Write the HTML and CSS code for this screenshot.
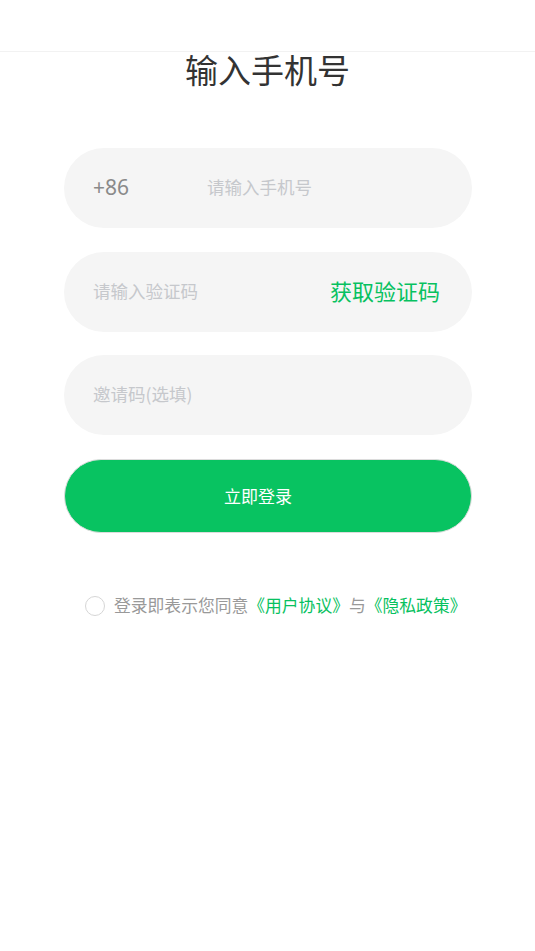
FILE: index.html
```html
<!DOCTYPE html>
<html lang="zh-CN">
<head>
<meta charset="utf-8">
<title>输入手机号</title>
<link rel="stylesheet" href="styles.css">
</head>
<body>
<div class="header"></div>
<h1 class="title">输入手机号</h1>
<div class="form">
  <div class="field">
    <span class="prefix">+86</span>
    <span class="placeholder">请输入手机号</span>
  </div>
  <div class="field">
    <span class="placeholder grow">请输入验证码</span>
    <span class="getcode">获取验证码</span>
  </div>
  <div class="field">
    <span class="placeholder">邀请码(选填)</span>
  </div>
  <div class="btn">立即登录</div>
</div>
<div class="agree">
  <span class="radio"></span>
  <span class="agree-text">登录即表示您同意<span class="link">《用户协议》</span>与<span class="link">《隐私政策》</span></span>
</div>
</body>
</html>
```
FILE: styles.css
```css
body {
  margin: 0;
  background: #fff;
  font-family: "Noto Sans CJK SC", "Noto Sans", sans-serif;
}
.header {
  height: 52px;
  border-bottom: 1px solid #f2f2f2;
  box-sizing: border-box;
}
.title {
  margin: 0;
  height: 36px;
  line-height: 34px;
  font-size: 33px;
  font-weight: 400;
  color: #333;
  text-align: center;
}
.form {
  margin: 60px 63px 0 64px;
  display: flex;
  flex-direction: column;
  gap: 23.5px;
}
.field {
  height: 80px;
  border-radius: 40px;
  background: #f5f5f5;
  display: flex;
  align-items: center;
  padding: 0 32px 3px 29px;
  box-sizing: border-box;
}
.prefix {
  width: 114px;
  font-size: 21px;
  color: #8a8a8a;
  font-family: "Noto Sans", sans-serif;
}
.placeholder {
  font-size: 17.5px;
  color: #c6c8cc;
}
.grow {
  flex: 1;
}
.getcode {
  font-size: 22px;
  color: #07c160;
}
.btn {
  height: 74px;
  border-radius: 37px;
  background: #08c361;
  border: 1px solid #dcdcdc;
  box-sizing: border-box;
  display: flex;
  align-items: center;
  justify-content: center;
  padding: 0 20px 2px 0;
  color: #fff;
  font-size: 17px;
  margin-top: 0.5px;
}
.agree {
  margin-top: 62px;
  display: flex;
  align-items: center;
  padding-left: 85px;
  gap: 9px;
}
.radio {
  width: 20px;
  height: 20px;
  border: 1px solid #d6d6d6;
  border-radius: 50%;
  box-sizing: border-box;
}
.agree-text {
  font-size: 16.8px;
  color: #999;
  line-height: 20px;
  padding-bottom: 1px;
}
.link {
  color: #07c160;
}
```
